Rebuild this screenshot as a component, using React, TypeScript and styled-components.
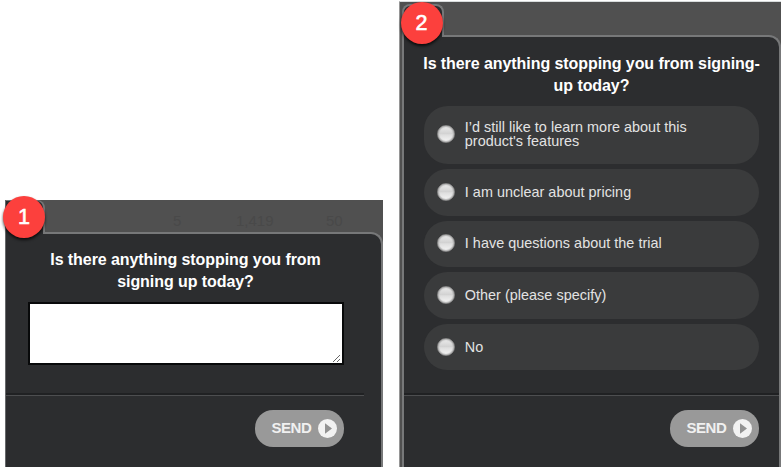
import React from "react";
import styled, { createGlobalStyle } from "styled-components";

const GlobalStyle = createGlobalStyle`
  * { box-sizing: border-box; }
  html, body { margin: 0; background: #fff; overflow: hidden; }
  body { font-family: "Liberation Sans", Arial, sans-serif; }
`;

const Page = styled.main`
  width: 781px;
  height: 467px;
  display: flex;
  align-items: flex-end;
  gap: 16px;
  padding-left: 5px;
  overflow: hidden;
`;

const Survey = styled.section<{ $wide?: boolean }>`
  position: relative;
  flex: none;
  width: ${(p) => (p.$wide ? 382 : 378)}px;
  height: ${(p) => (p.$wide ? 466 : 267)}px;
  display: flex;
  flex-direction: column;
  background: #505050;
  border-left: 1px solid ${(p) => (p.$wide ? "#969696" : "#66686a")};
  ${(p) => p.$wide && "border-top: 1px solid #d8dcdd; padding-left: 2px;"}
`;

const Backdrop = styled.div<{ $wide?: boolean }>`
  height: ${(p) => (p.$wide ? 33 : 32)}px;
  flex: none;
  display: flex;
  align-items: flex-start;
`;

const Tab = styled.div<{ $wide?: boolean }>`
  width: ${(p) => (p.$wide ? 42 : 39)}px;
  height: ${(p) => (p.$wide ? 33 : 34)}px;
  margin-top: ${(p) => (p.$wide ? 2 : 0)}px;
  flex: none;
  position: relative;
  z-index: 1;
  background: #2c2d2f;
  border: 2px solid #777879;
  border-bottom: 0;
  border-left-width: ${(p) => (p.$wide ? 2 : 0)}px;
  border-top-width: ${(p) => (p.$wide ? 2 : 1)}px;
  border-radius: ${(p) => (p.$wide ? "8px 8px 0 0" : "0 8px 0 0")};
`;

const Ghosts = styled.div`
  display: grid;
  grid-template-columns: 63px 90px 40px;
  margin: 12px 0 0 128px;
  font-size: 15px;
  line-height: 18px;
  color: #494949;
`;

const Body = styled.div<{ $wide?: boolean }>`
  flex: 1;
  display: flex;
  flex-direction: column;
  background: #2c2d2f;
  border: 2px solid #777879;
  border-bottom: 0;
  border-left-width: ${(p) => (p.$wide ? 2 : 0)}px;
  border-radius: 0 12px 0 0;
`;

const Badge = styled.div<{ $wide?: boolean }>`
  position: absolute;
  z-index: 2;
  left: ${(p) => (p.$wide ? 0.5 : -3)}px;
  top: ${(p) => (p.$wide ? 0 : -4)}px;
  width: 42px;
  height: 42px;
  border-radius: 50%;
  background: #fc403d;
  box-shadow: 0 2px 3px rgba(0, 0, 0, 0.75);
  color: #fff;
  font-size: 21.5px;
  line-height: 43px;
  text-align: center;
  -webkit-text-stroke: 0.6px #fff;
`;

const Title = styled.h2<{ $wide?: boolean }>`
  margin: ${(p) => (p.$wide ? "16px 0 1px 0" : "15px 16px 1px 0")};
  font-size: 16px;
  line-height: 22px;
  letter-spacing: -0.07px;
  text-align: center;
  color: #fff;
  white-space: nowrap;
`;

const Answer = styled.div`
  width: 316px;
  height: 63px;
  margin: 8px 0 0 21.5px;
  border: 2px solid #08090a;
  background: #fff;
  display: flex;
  align-items: flex-end;
  justify-content: flex-end;
`;

const Options = styled.div`
  width: 335px;
  margin: 7.7px 0 0 20px;
  display: flex;
  flex-direction: column;
  gap: 5px;
`;

const Option = styled.div<{ $tall?: boolean }>`
  height: ${(p) => (p.$tall ? 58.4 : 46.6)}px;
  padding: 0 13px 1px;
  display: flex;
  align-items: center;
  gap: 9.8px;
  border-radius: 24px;
  background: #3a3b3c;
  color: #e3e3e3;
  font-size: 14.4px;
  line-height: 14px;
`;

const Radio = styled.span`
  width: 18px;
  height: 18px;
  flex: none;
  border-radius: 50%;
  border: 1.5px solid #858585;
  background: linear-gradient(#ececec 0%, #d2d2d2 48%, #dedede 55%, #f6f6f6 100%);
  box-shadow: inset 0 0 1px 1px #b8b8b8;
`;

const Label = styled.span`
  white-space: nowrap;
  letter-spacing: 0.03px;
`;

const Footer = styled.footer<{ $wide?: boolean }>`
  margin-top: auto;
  margin-right: ${(p) => (p.$wide ? 0 : 17)}px;
  height: 72px;
  padding-top: 14px;
  padding-right: 20px;
  display: flex;
  justify-content: flex-end;
  align-items: flex-start;
  border-top: 1px solid #4d4e50;
  box-shadow: 0 -2px 0 #202123;
`;

const Send = styled.button`
  width: 89px;
  height: 37px;
  padding: 0 7px 1px 16.5px;
  display: flex;
  align-items: center;
  justify-content: space-between;
  border: 0;
  border-radius: 18px;
  background: #999;
  color: #f0f0f0;
  font: bold 15px/36px "Liberation Sans", Arial, sans-serif;
  letter-spacing: -0.45px;
`;

const PlayIcon = styled.svg`
  position: relative;
  top: 0.5px;
`;

const Play = () => (
  <PlayIcon width="19" height="19" viewBox="0 0 19 19">
    <circle cx="9.5" cy="9.5" r="9.5" fill="#f2f2f2" />
    <path d="M7 4.3 14 9.5 7 14.7Z" fill="#929292" />
  </PlayIcon>
);

const Grip = () => (
  <svg width="10" height="10" viewBox="0 0 10 10">
    <path d="M1 9 8 2M5 9 8 6" stroke="#666" strokeWidth="1" />
  </svg>
);

const SurveyFooter = ({ wide }: { wide?: boolean }) => (
  <Footer $wide={wide}>
    <Send type="button">
      <span>SEND</span>
      <Play />
    </Send>
  </Footer>
);

const choices = [
  "I am unclear about pricing",
  "I have questions about the trial",
  "Other (please specify)",
  "No",
];

export default function App() {
  return (
    <>
      <GlobalStyle />
      <Page>
        <Survey>
          <Badge>1</Badge>
          <Backdrop>
            <Tab />
            <Ghosts>
              <span>5</span>
              <span>1,419</span>
              <span>50</span>
            </Ghosts>
          </Backdrop>
          <Body>
            <Title>
              Is there anything stopping you from
              <br />
              signing up today?
            </Title>
            <Answer>
              <Grip />
            </Answer>
            <SurveyFooter />
          </Body>
        </Survey>
        <Survey $wide>
          <Badge $wide>2</Badge>
          <Backdrop $wide>
            <Tab $wide />
          </Backdrop>
          <Body $wide>
            <Title $wide>
              Is there anything stopping you from signing-
              <br />
              up today?
            </Title>
            <Options>
              <Option $tall>
                <Radio />
                <Label>
                  I’d still like to learn more about this
                  <br />
                  product's features
                </Label>
              </Option>
              {choices.map((c) => (
                <Option key={c}>
                  <Radio />
                  <Label>{c}</Label>
                </Option>
              ))}
            </Options>
            <SurveyFooter wide />
          </Body>
        </Survey>
      </Page>
    </>
  );
}
